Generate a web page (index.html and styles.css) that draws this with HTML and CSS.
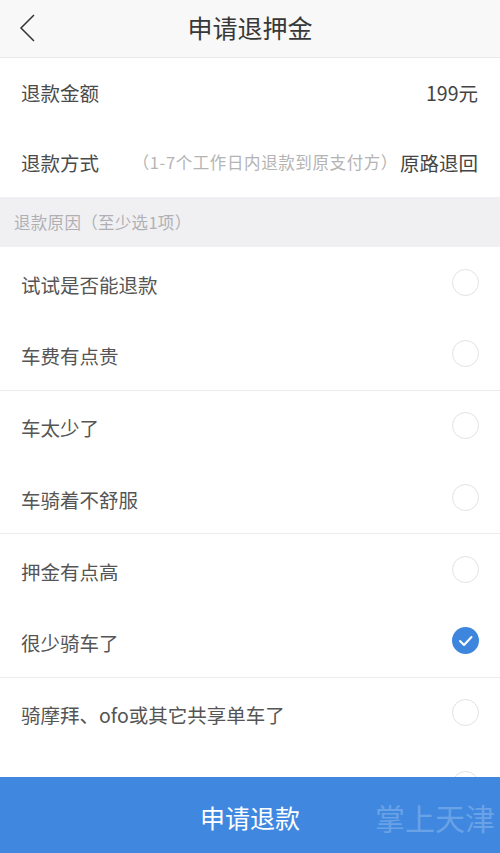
FILE: index.html
```html
<!DOCTYPE html>
<html lang="zh-CN">
<head>
<meta charset="utf-8">
<title>申请退押金</title>
<link rel="stylesheet" href="styles.css">
</head>
<body>
<div class="app">
  <header class="topbar">
    <span class="back">
      <svg width="20" height="30" viewBox="0 0 20 30"><polyline points="15,2 2,15 15,28" fill="none" stroke="#333" stroke-width="1.5"/></svg>
    </span>
    <h1 class="title">申请退押金</h1>
  </header>
  <div class="content">
    <div class="info-row">
      <span class="label">退款金额</span>
      <span class="value">199元</span>
    </div>
    <div class="info-row">
      <span class="label">退款方式</span>
      <span class="value"><span class="hint">（1-7个工作日内退款到原支付方）</span>原路退回</span>
    </div>
    <div class="section">退款原因（至少选1项）</div>
    <ul class="reasons">
      <li class="reason"><span>试试是否能退款</span><i class="radio"></i></li>
      <li class="reason sep"><span>车费有点贵</span><i class="radio"></i></li>
      <li class="reason"><span>车太少了</span><i class="radio"></i></li>
      <li class="reason sep"><span>车骑着不舒服</span><i class="radio"></i></li>
      <li class="reason"><span>押金有点高</span><i class="radio"></i></li>
      <li class="reason sep"><span>很少骑车了</span><i class="radio checked"><svg width="27" height="27" viewBox="0 0 27 27"><polyline points="8,14 12,18 19.5,10" fill="none" stroke="#fff" stroke-width="2" stroke-linecap="round" stroke-linejoin="round"/></svg></i></li>
      <li class="reason"><span>骑摩拜、ofo或其它共享单车了</span><i class="radio"></i></li>
      <li class="reason sep"><span></span><i class="radio"></i></li>
    </ul>
  </div>
  <footer class="submit">
    <span class="submit-text">申请退款</span>
    <span class="watermark">掌上天津</span>
  </footer>
</div>
</body>
</html>
```
FILE: styles.css
```css
* { box-sizing: border-box; }
html, body {
  margin: 0;
  padding: 0;
  width: 500px;
  height: 853px;
  overflow: hidden;
  background: #fff;
  font-family: "Noto Sans CJK SC", "Noto Sans", sans-serif;
}
.app {
  display: flex;
  flex-direction: column;
  height: 853px;
}
.topbar {
  flex: none;
  height: 58px;
  background: #f8f8f8;
  border-bottom: 1px solid #e9e9e9;
  display: flex;
  align-items: center;
  justify-content: center;
  position: relative;
}
.back {
  position: absolute;
  left: 19px;
  top: 13px;
  width: 20px;
  height: 30px;
}
.back svg { display: block; }
.title {
  margin: 0;
  font-size: 25px;
  font-weight: normal;
  color: #383838;
  line-height: 1;
  padding-bottom: 2px;
}
.content {
  flex: 1;
  overflow: hidden;
}
.info-row {
  height: 69.5px;
  display: flex;
  align-items: center;
  justify-content: space-between;
  padding: 0 22px 0 21px;
  font-size: 19.5px;
  color: #4a4a4a;
}
.value { color: #444; display: flex; align-items: center; }
.hint {
  font-size: 16.5px;
  color: #b4b4b4;
  letter-spacing: 0.6px;
  margin-right: 2px;
}
.section {
  height: 50px;
  background: #f0f0f3;
  display: flex;
  align-items: center;
  padding-left: 14px;
  font-size: 16.5px;
  color: #b0b0b4;
  letter-spacing: 0.3px;
}
.reasons {
  list-style: none;
  margin: 0;
  padding: 0;
}
.reason {
  height: 71.75px;
  display: flex;
  align-items: center;
  justify-content: space-between;
  padding: 0 21px 0 21px;
  font-size: 19.5px;
  color: #555;
}
.reason span { padding-top: 3px; }
.reason.sep { border-bottom: 1.5px solid #ececec; }
.radio {
  width: 27px;
  height: 27px;
  border-radius: 50%;
  border: 1.5px solid #e2e2e2;
  display: block;
  margin-top: -1px;
}
.radio.checked {
  border: none;
  background: #3e86dd;
}
.radio svg { display: block; }
.submit {
  flex: none;
  height: 76px;
  background: #4088df;
  display: flex;
  align-items: center;
  justify-content: center;
  position: relative;
}
.submit-text {
  color: #fff;
  font-size: 25px;
  padding-top: 4px;
}
.watermark {
  position: absolute;
  right: 5px;
  top: 25px;
  font-size: 30px;
  color: rgba(255, 255, 255, 0.22);
  line-height: 1;
}
```
